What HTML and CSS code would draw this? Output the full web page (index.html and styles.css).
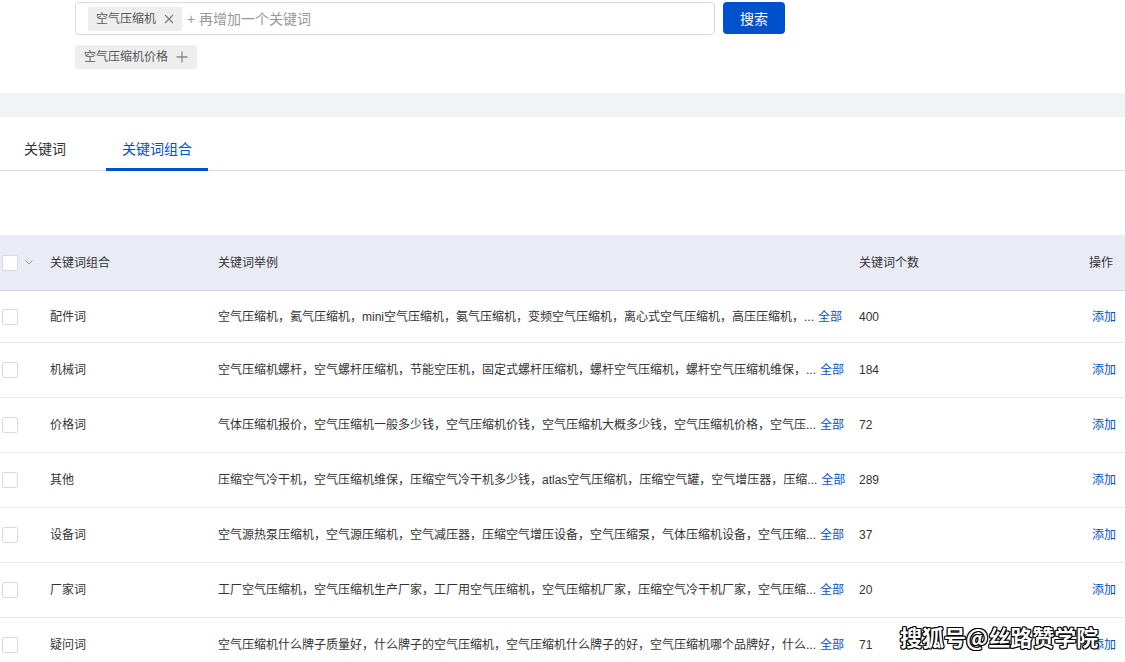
FILE: index.html
```html
<!DOCTYPE html>
<html lang="zh-CN">
<head>
<meta charset="utf-8">
<title>关键词组合</title>
<link rel="stylesheet" href="styles.css">
</head>
<body>
<div class="page">
  <section class="search">
    <div class="search-row">
      <div class="search-box">
        <span class="tag">空气压缩机
          <svg class="tag-close" width="10" height="10" viewBox="0 0 10 10"><path d="M1 1L9 9M9 1L1 9" stroke="#777" stroke-width="1.1" fill="none"/></svg>
        </span>
        <span class="placeholder">+ 再增加一个关键词</span>
      </div>
      <button class="btn-search">搜索</button>
    </div>
    <div class="suggest">
      <span class="tag tag-suggest">空气压缩机价格
        <svg class="tag-plus" width="12" height="12" viewBox="0 0 12 12"><path d="M6 0.5V11.5M0.5 6H11.5" stroke="#888" stroke-width="1.3" fill="none"/></svg>
      </span>
    </div>
  </section>

  <div class="band"></div>

  <nav class="tabs">
    <a class="tab">关键词</a>
    <a class="tab active">关键词组合</a>
  </nav>

  <div class="table">
    <div class="thead row">
      <div class="cell cell-check">
        <span class="checkbox"></span>
        <svg class="chev" width="8" height="5" viewBox="0 0 8 5"><path d="M0.5 0.5L4 4L7.5 0.5" stroke="#999" stroke-width="1" fill="none"/></svg>
      </div>
      <div class="cell">关键词组合</div>
      <div class="cell">关键词举例</div>
      <div class="cell">关键词个数</div>
      <div class="cell">操作</div>
    </div>

    <div class="row trow first">
      <div class="cell cell-check"><span class="checkbox"></span></div>
      <div class="cell">配件词</div>
      <div class="cell examples"><span class="ex-text">空气压缩机，氦气压缩机，mini空气压缩机，氨气压缩机，变频空气压缩机，离心式空气压缩机，高压压缩机，...</span><a class="link">全部</a></div>
      <div class="cell">400</div>
      <div class="cell action"><a class="link">添加</a></div>
    </div>

    <div class="row trow">
      <div class="cell cell-check"><span class="checkbox"></span></div>
      <div class="cell">机械词</div>
      <div class="cell examples"><span class="ex-text">空气压缩机螺杆，空气螺杆压缩机，节能空压机，固定式螺杆压缩机，螺杆空气压缩机，螺杆空气压缩机维保，...</span><a class="link">全部</a></div>
      <div class="cell">184</div>
      <div class="cell action"><a class="link">添加</a></div>
    </div>

    <div class="row trow">
      <div class="cell cell-check"><span class="checkbox"></span></div>
      <div class="cell">价格词</div>
      <div class="cell examples"><span class="ex-text">气体压缩机报价，空气压缩机一般多少钱，空气压缩机价钱，空气压缩机大概多少钱，空气压缩机价格，空气压...</span><a class="link">全部</a></div>
      <div class="cell">72</div>
      <div class="cell action"><a class="link">添加</a></div>
    </div>

    <div class="row trow">
      <div class="cell cell-check"><span class="checkbox"></span></div>
      <div class="cell">其他</div>
      <div class="cell examples"><span class="ex-text">压缩空气冷干机，空气压缩机维保，压缩空气冷干机多少钱，atlas空气压缩机，压缩空气罐，空气增压器，压缩...</span><a class="link">全部</a></div>
      <div class="cell">289</div>
      <div class="cell action"><a class="link">添加</a></div>
    </div>

    <div class="row trow">
      <div class="cell cell-check"><span class="checkbox"></span></div>
      <div class="cell">设备词</div>
      <div class="cell examples"><span class="ex-text">空气源热泵压缩机，空气源压缩机，空气减压器，压缩空气增压设备，空气压缩泵，气体压缩机设备，空气压缩...</span><a class="link">全部</a></div>
      <div class="cell">37</div>
      <div class="cell action"><a class="link">添加</a></div>
    </div>

    <div class="row trow">
      <div class="cell cell-check"><span class="checkbox"></span></div>
      <div class="cell">厂家词</div>
      <div class="cell examples"><span class="ex-text">工厂空气压缩机，空气压缩机生产厂家，工厂用空气压缩机，空气压缩机厂家，压缩空气冷干机厂家，空气压缩...</span><a class="link">全部</a></div>
      <div class="cell">20</div>
      <div class="cell action"><a class="link">添加</a></div>
    </div>

    <div class="row trow">
      <div class="cell cell-check"><span class="checkbox"></span></div>
      <div class="cell">疑问词</div>
      <div class="cell examples"><span class="ex-text">空气压缩机什么牌子质量好，什么牌子的空气压缩机，空气压缩机什么牌子的好，空气压缩机哪个品牌好，什么...</span><a class="link">全部</a></div>
      <div class="cell">71</div>
      <div class="cell action"><a class="link">添加</a></div>
    </div>
  </div>

  <div class="watermark">搜狐号@丝路赞学院</div>
</div>
</body>
</html>
```

FILE: styles.css
```css
html, body {
  margin: 0;
  padding: 0;
  background: #ffffff;
}

body {
  font-family: "Liberation Sans", "Noto Sans CJK SC", sans-serif;
  color: #333333;
  font-size: 12px;
  overflow: hidden;
  height: 662px;
}

.page {
  position: relative;
  width: 1125px;
  height: 662px;
  overflow: hidden;
}

/* search area */
.search {
  padding: 2px 0 0 75px;
  height: 93px;
  box-sizing: border-box;
}

.search-row {
  display: flex;
  align-items: flex-start;
  gap: 8px;
}

.search-box {
  width: 640px;
  height: 33px;
  box-sizing: border-box;
  border: 1px solid #d3d9e8;
  border-radius: 4px;
  display: flex;
  align-items: center;
  padding-left: 12px;
  gap: 5px;
}

.tag {
  display: inline-flex;
  align-items: center;
  height: 24px;
  padding: 0 8px;
  background: #eeeeee;
  border-radius: 2px;
  color: #555555;
  font-size: 12px;
  line-height: 24px;
  gap: 8px;
  box-sizing: border-box;
}

.placeholder {
  font-size: 14px;
  color: #999999;
  line-height: 20px;
}

.btn-search {
  width: 62px;
  height: 32px;
  border: none;
  border-radius: 4px;
  background: #0052cc;
  color: #ffffff;
  font-family: inherit;
  font-size: 14px;
  padding: 0;
  cursor: pointer;
}

.suggest {
  margin-top: 10px;
  display: flex;
}

.tag-suggest {
  padding: 0 9px;
  background: #eeeeee;
}

/* gray separator */
.band {
  height: 24px;
  background: #f2f3f7;
}

/* tabs */
.tabs {
  display: flex;
  gap: 24px;
  padding-left: 8px;
  height: 54px;
  box-sizing: border-box;
  border-bottom: 1px solid #d8dcea;
}

.tab {
  display: flex;
  align-items: center;
  box-sizing: border-box;
  height: 54px;
  padding: 12px 16px 0;
  border-bottom: 3px solid transparent;
  font-size: 14px;
  line-height: 16px;
  color: #333333;
  cursor: pointer;
}

.tab.active {
  color: #0052cc;
  border-bottom-color: #0052cc;
}

/* table */
.table {
  margin-top: 64px;
}

.row {
  display: grid;
  grid-template-columns: 50px 168px 641px 230px 1fr;
  align-items: center;
}

.thead {
  height: 56px;
  background: #e9ecf4;
  border-bottom: 1px solid #d5d9e6;
  box-sizing: border-box;
}

.trow {
  height: 55px;
  border-bottom: 1px solid #e8eaf1;
  box-sizing: border-box;
}

.trow.first {
  height: 52px;
}

.cell {
  font-size: 12px;
  line-height: 16px;
  white-space: nowrap;
  min-width: 0;
}

.cell-check {
  display: flex;
  align-items: center;
  padding-left: 2px;
  gap: 7px;
}

.checkbox {
  width: 16px;
  height: 16px;
  box-sizing: border-box;
  border: 1px solid #d5d9e6;
  border-radius: 2px;
  background: #ffffff;
}

.examples {
  display: flex;
  align-items: center;
  padding-right: 8px;
}

.ex-text {
  overflow: hidden;
  max-width: 603px;
  white-space: nowrap;
}

.link {
  color: #0052cc;
  cursor: pointer;
}

.examples .link {
  margin-left: 4px;
}

.action {
  padding-left: 3px;
}

/* watermark overlay */
.watermark {
  position: absolute;
  left: 900px;
  top: 620px;
  font-family: "Noto Sans CJK SC", sans-serif;
  font-size: 22px;
  font-weight: bold;
  color: #ffffff;
  text-shadow:
    -1px -1px 0 #000, 1px -1px 0 #000, -1px 1px 0 #000, 1px 1px 0 #000,
    0 -1px 0 #000, 0 1px 0 #000, -1px 0 0 #000, 1px 0 0 #000;
  white-space: nowrap;
}
```
